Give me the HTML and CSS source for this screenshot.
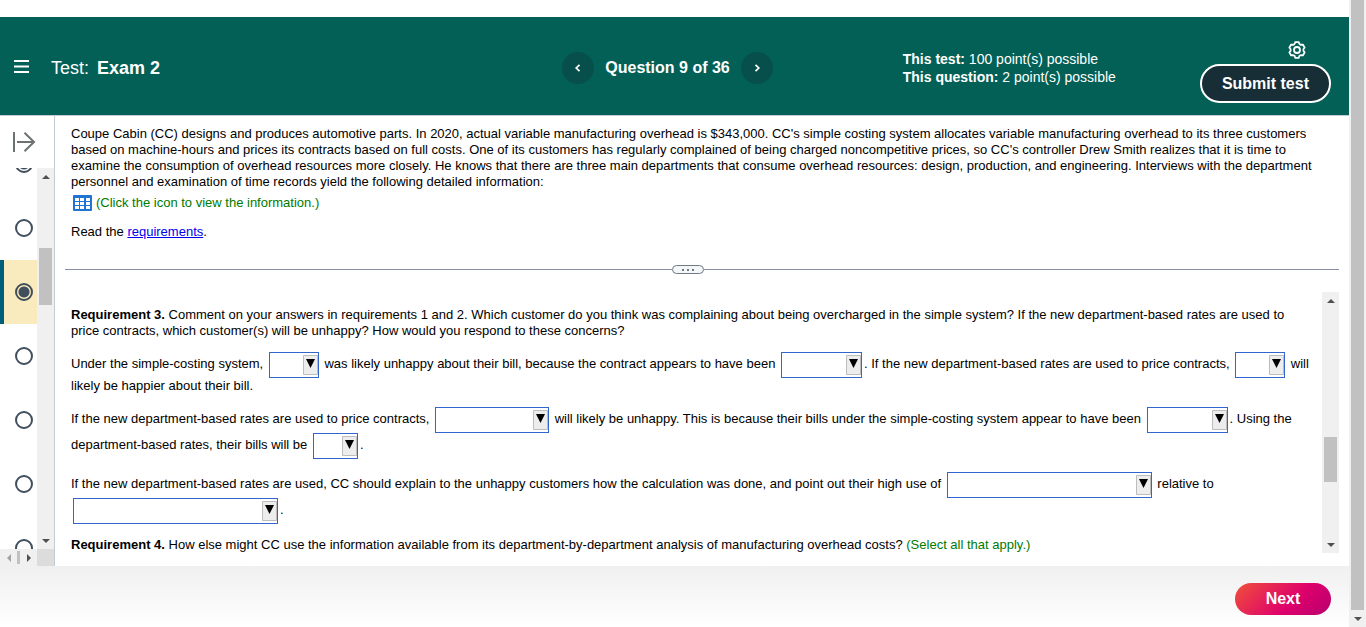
FILE: index.html
```html
<!DOCTYPE html>
<html lang="en">
<head>
    <meta charset="UTF-8">
    <meta name="viewport" content="width=device-width, initial-scale=1.0">
    <title>Exam 2</title>
    <link rel="stylesheet" href="styles.css">
</head>
<body>
    <div class="page">
        <header class="header">
            <div class="header-left">
                <button type="button" class="menu-btn" aria-label="Menu">
                    <svg width="15" height="13" viewBox="0 0 15 13"><path d="M0 1h15M0 6.5h15M0 12h15" stroke="#fff" stroke-width="2"/></svg>
                </button>
                <h1 class="test-title">Test: <strong>Exam 2</strong></h1>
            </div>

            <nav class="question-nav">
                <button type="button" class="round-btn" aria-label="Previous question">
                    <svg width="8" height="8" viewBox="0 0 8 8"><path d="M5.5 .8L2.2 4l3.3 3.2" fill="none" stroke="#fff" stroke-width="1.7"/></svg>
                </button>
                <span class="question-label">Question 9 of 36</span>
                <button type="button" class="round-btn" aria-label="Next question">
                    <svg width="8" height="8" viewBox="0 0 8 8"><path d="M2.5 .8L5.8 4 2.5 7.2" fill="none" stroke="#fff" stroke-width="1.7"/></svg>
                </button>
            </nav>

            <div class="header-right">
                <div class="points">
                    <div><strong>This test:</strong> 100 point(s) possible</div>
                    <div><strong>This question:</strong> 2 point(s) possible</div>
                </div>
                <div class="header-actions">
                    <button type="button" class="gear-btn" aria-label="Settings">
                        <svg width="18" height="18" viewBox="0 0 18 18" fill="none" stroke="#fff" stroke-width="1.8" stroke-linejoin="round">
                            <path d="M7.2 1.200h3.600Q11 3.200 12.150 3.550 13.400 3.900 14.850 3.550L16.650 6.660Q15.300 7.700 15.300 9 15.300 10.300 16.650 11.340L14.850 14.450Q13.400 14.100 12.150 14.450 11 14.800 10.800 16.800H7.200Q7 14.800 5.850 14.450 4.600 14.100 3.150 14.450L1.350 11.340Q2.700 10.300 2.700 9 2.700 7.700 1.350 6.660L3.150 3.550Q4.600 3.900 5.850 3.550 7 3.200 7.200 1.200z"/>
                            <circle cx="9" cy="9" r="3"/>
                        </svg>
                    </button>
                    <button type="button" class="submit-btn">Submit test</button>
                </div>
            </div>
        </header>

        <main class="main">
            <aside class="sidebar">
                <button type="button" class="expand-btn" aria-label="Expand question list">
                    <svg width="24" height="20" viewBox="0 0 24 20"><path d="M2 0v20M5 10h17M12.500 .8L22 10l-9.500 9.200" fill="none" stroke="#6b7270" stroke-width="2"/></svg>
                </button>
                <div class="sidebar-body">
                    <div class="question-list">
                        <label class="question-item"><input type="radio" name="question" aria-label="Question 7" class="answered"></label>
                        <label class="question-item"><input type="radio" name="question" aria-label="Question 8"></label>
                        <label class="question-item current"><input type="radio" name="question" aria-label="Question 9" checked></label>
                        <label class="question-item"><input type="radio" name="question" aria-label="Question 10"></label>
                        <label class="question-item"><input type="radio" name="question" aria-label="Question 11"></label>
                        <label class="question-item"><input type="radio" name="question" aria-label="Question 12"></label>
                        <label class="question-item"><input type="radio" name="question" aria-label="Question 13"></label>
                    </div>
                    <div class="scrollbar list-scroll">
                        <span class="arrow up"></span>
                        <span class="thumb"></span>
                        <span class="arrow down"></span>
                    </div>
                </div>
                <div class="scrollbar-row">
                    <span class="arrow left"></span>
                    <span class="row-thumb"></span>
                    <span class="arrow right"></span>
                    <span class="corner"></span>
                </div>
            </aside>

            <section class="content">
                <div class="problem">
                    <p>Coupe Cabin (CC) designs and produces automotive parts. In 2020, actual variable manufacturing overhead is $343,000. CC's simple costing system allocates variable manufacturing overhead to its three customers based on machine-hours and prices its contracts based on full costs. One of its customers has regularly complained of being charged noncompetitive prices, so CC's controller Drew Smith realizes that it is time to examine the consumption of overhead resources more closely. He knows that there are three main departments that consume overhead resources: design, production, and engineering. Interviews with the department personnel and examination of time records yield the following detailed information:</p>
                    <p class="info-link">
                        <svg width="19" height="16" viewBox="0 0 19 16">
                            <rect width="19" height="16" rx="1" fill="#1f74d4"/>
                            <path d="M2 3h4v3H2zM7 3h4v3H7zM13 3h4v3h-4zM2 7h4v3H2zM7 7h4v3H7zM13 7h4v3h-4zM2 11h4v3H2zM7 11h4v3H7zM13 11h4v3h-4z" fill="#fff"/>
                        </svg>
                        <span class="green">(Click the icon to view the information.)</span>
                    </p>
                    <p class="read">Read the <a href="#requirements">requirements</a>.</p>
                </div>

                <div class="splitter">
                    <button type="button" class="splitter-handle" aria-label="Resize panels"><i></i><i></i><i></i></button>
                </div>

                <div class="answer">
                    <div class="answer-text" id="requirements">
                        <p><strong>Requirement 3.</strong> Comment on your answers in requirements 1 and 2. Which customer do you think was complaining about being overcharged in the simple system? If the new department-based rates are used to price contracts, which customer(s) will be unhappy? How would you respond to these concerns?</p>
                        <p>Under the simple-costing system, <select class="w-sm" aria-label="Unhappy customer"><option></option></select> was likely unhappy about their bill, because the contract appears to have been <select class="w-md" aria-label="Contract pricing"><option></option></select>. If the new department-based rates are used to price contracts, <select class="w-sm" aria-label="Happier customer"><option></option></select> will likely be happier about their bill.</p>
                        <p>If the new department-based rates are used to price contracts, <select class="w-lg" aria-label="Unhappy customers"><option></option></select> will likely be unhappy. This is because their bills under the simple-costing system appear to have been <select class="w-md" aria-label="Earlier bills"><option></option></select>. Using the department-based rates, their bills will be <select class="w-xs" aria-label="New bills"><option></option></select>.</p>
                        <p>If the new department-based rates are used, CC should explain to the unhappy customers how the calculation was done, and point out their high use of <select class="w-xl" aria-label="High use of"><option></option></select> relative to <select class="w-xl" aria-label="Relative to"><option></option></select>.</p>
                        <p><strong>Requirement 4.</strong> How else might CC use the information available from its department-by-department analysis of manufacturing overhead costs? <span class="green">(Select all that apply.)</span></p>
                    </div>
                    <div class="scrollbar answer-scroll">
                        <span class="arrow up"></span>
                        <span class="thumb"></span>
                        <span class="arrow down"></span>
                    </div>
                </div>
            </section>
        </main>

        <footer class="footer">
            <button type="button" class="next-btn">Next</button>
        </footer>
    </div>

    <div class="scrollbar page-scroll">
        <span class="thumb"></span>
        <span class="arrow down"></span>
    </div>
</body>
</html>
```
FILE: styles.css
```css
* {
    box-sizing: border-box;
}

body {
    margin: 0;
    height: 100vh;
    display: flex;
    overflow: hidden;
    font-family: "Liberation Sans", Arial, sans-serif;
    font-size: 13px;
    line-height: 16px;
    color: #000;
    background: #fff;
}

button {
    font-family: inherit;
    border: none;
    background: none;
    padding: 0;
    cursor: pointer;
}

svg {
    display: block;
}

p {
    margin: 0;
}

.page {
    flex: 1;
    min-width: 0;
    display: flex;
    flex-direction: column;
    padding-top: 17px;
}

/* header */
.header {
    display: grid;
    grid-template-columns: 1fr auto 1fr;
    align-items: center;
    height: 99px;
    padding: 0 18px 0 4px;
    background: #036056;
    border-bottom: 1px solid #c3cbd6;
    color: #fff;
}

.header-left {
    display: flex;
    align-items: center;
    gap: 12px;
}

.menu-btn {
    padding: 10px;
}

.test-title {
    margin: 0;
    padding-top: 4px;
    font-size: 18px;
    line-height: 22px;
    font-weight: normal;
}

.test-title strong {
    margin-left: 3px;
}

.question-nav {
    display: flex;
    align-items: center;
    gap: 11px;
    padding-top: 3px;
}

.round-btn {
    width: 32px;
    height: 32px;
    border-radius: 50%;
    background: #074f4b;
    display: flex;
    align-items: center;
    justify-content: center;
}

.question-label {
    font-size: 16px;
    font-weight: bold;
}

.header-right {
    display: flex;
    align-items: center;
    justify-content: space-between;
    padding-left: 130px;
}

.points {
    padding-top: 4px;
    font-size: 14px;
    line-height: 18px;
    white-space: nowrap;
}

.header-actions {
    display: flex;
    flex-direction: column;
    align-items: flex-end;
    gap: 5px;
    padding-top: 12px;
}

.gear-btn {
    margin-right: 25px;
}

.submit-btn {
    height: 39px;
    padding: 0 20px;
    border: 2px solid #fff;
    border-radius: 20px;
    background: #182e36;
    color: #fff;
    font-size: 16px;
    font-weight: bold;
    white-space: nowrap;
}

/* main area */
.main {
    flex: 1;
    min-height: 0;
    display: flex;
}

.sidebar {
    width: 55px;
    display: flex;
    flex-direction: column;
    border-right: 1px solid #c3cbd6;
}

.expand-btn {
    height: 52px;
    padding-left: 12px;
}

.sidebar-body {
    flex: 1;
    min-height: 0;
    display: flex;
}

.question-list {
    flex: 1;
    overflow: hidden;
}

.question-item {
    display: flex;
    align-items: center;
    height: 64px;
    padding-left: 15px;
}

.question-item:first-child {
    margin-top: -36px;
}

.question-item.current {
    padding-left: 11px;
    border-left: 4px solid #00607a;
    background: #f9ebbd;
}

.question-item input {
    appearance: none;
    flex-shrink: 0;
    width: 18px;
    height: 18px;
    margin: 0;
    border: 2px solid #414e5b;
    border-radius: 50%;
    background: #fff;
}

.question-item input.answered {
    background: radial-gradient(circle, #414e5b 5px, #fff 6px);
}

.question-item input:checked {
    background: radial-gradient(circle, #414e5b 5px, #f9ebbd 6px);
}

/* scrollbars */
.scrollbar {
    width: 17px;
    flex-shrink: 0;
    display: flex;
    flex-direction: column;
    align-items: center;
    background: #f0f0f0;
}

.thumb {
    width: 13px;
    background: #c1c1c1;
}

.arrow {
    width: 17px;
    height: 17px;
    flex-shrink: 0;
    display: flex;
    align-items: center;
    justify-content: center;
}

.arrow::before {
    content: "";
    border: 4px solid transparent;
}

.arrow.up::before {
    border-top: none;
    border-bottom-color: #505050;
}

.arrow.down::before {
    border-bottom: none;
    border-top-color: #505050;
}

.arrow.left::before {
    border-left: none;
    border-right-color: #a3a3a3;
}

.arrow.right::before {
    border-right: none;
    border-left-color: #505050;
}

.arrow.down {
    margin-top: auto;
}

.list-scroll .thumb {
    height: 57px;
    margin-top: 63px;
}

.answer-scroll .thumb {
    height: 45px;
    margin-top: 128px;
}

.page-scroll .thumb {
    flex: 1;
}

.scrollbar-row {
    display: flex;
    align-items: center;
    height: 17px;
    background: #f0f0f0;
}

.row-thumb {
    width: 3px;
    height: 13px;
    background: #c1c1c1;
}

.corner {
    flex: 1;
    height: 17px;
    background: #dcdcdc;
}

/* problem text */
.content {
    flex: 1;
    min-width: 0;
    display: flex;
    flex-direction: column;
    padding: 10px 10px 13px;
}

.problem {
    padding: 0 20px 0 6px;
}

.info-link {
    display: flex;
    gap: 4px;
    padding: 5px 0 0 2px;
}

.green {
    color: #007a00;
}

.read {
    margin-top: 13px;
}

a {
    color: #0000ee;
}

.splitter {
    display: flex;
    align-items: center;
    margin-top: 25px;
}

.splitter::before,
.splitter::after {
    content: "";
    flex: 1;
    height: 1px;
    background: #8a90a5;
}

.splitter::before {
    flex-grow: 607;
}

.splitter::after {
    flex-grow: 635;
}

.splitter-handle {
    width: 32px;
    height: 9px;
    display: flex;
    align-items: center;
    justify-content: center;
    gap: 3px;
    border: 1px solid #6e7886;
    border-radius: 5px;
    background: #f4f7f7;
}

.splitter-handle i {
    width: 2px;
    height: 2px;
    background: #6e7886;
}

/* answer panel */
.answer {
    flex: 1;
    min-height: 0;
    display: flex;
    margin-top: 18px;
}

.answer-text {
    flex: 1;
    padding: 15px 6px 0;
}

.answer-text p {
    margin-bottom: 13px;
}

select {
    appearance: none;
    height: 26px;
    margin: 0 2px;
    padding: 0 18px 0 4px;
    vertical-align: middle;
    font-family: inherit;
    font-size: 13px;
    border: 1px solid #3366cc;
    border-radius: 0;
    background: #fff url("data:image/svg+xml,%3Csvg xmlns='http://www.w3.org/2000/svg' width='15' height='20'%3E%3Cpath d='M.5.5h14v19H.5z' fill='%23ededed' stroke='%23bdbdbd'/%3E%3Cpath d='M3 4h9L7.5 13z'/%3E%3C/svg%3E") no-repeat right 2px;
}

.w-xs {
    width: 45px;
}

.w-sm {
    width: 50px;
}

.w-md {
    width: 81px;
}

.w-lg {
    width: 114px;
}

.w-xl {
    width: 205px;
}

/* footer */
.footer {
    display: flex;
    align-items: center;
    justify-content: flex-end;
    height: 61px;
    padding: 4px 18px 0;
    background: linear-gradient(#f0f0f0, #fff);
}

.next-btn {
    width: 96px;
    height: 32px;
    border-radius: 16px;
    background: linear-gradient(135deg, #f0503a, #de006c 60%, #b8006e);
    color: #fff;
    font-size: 16px;
    font-weight: bold;
}
```
